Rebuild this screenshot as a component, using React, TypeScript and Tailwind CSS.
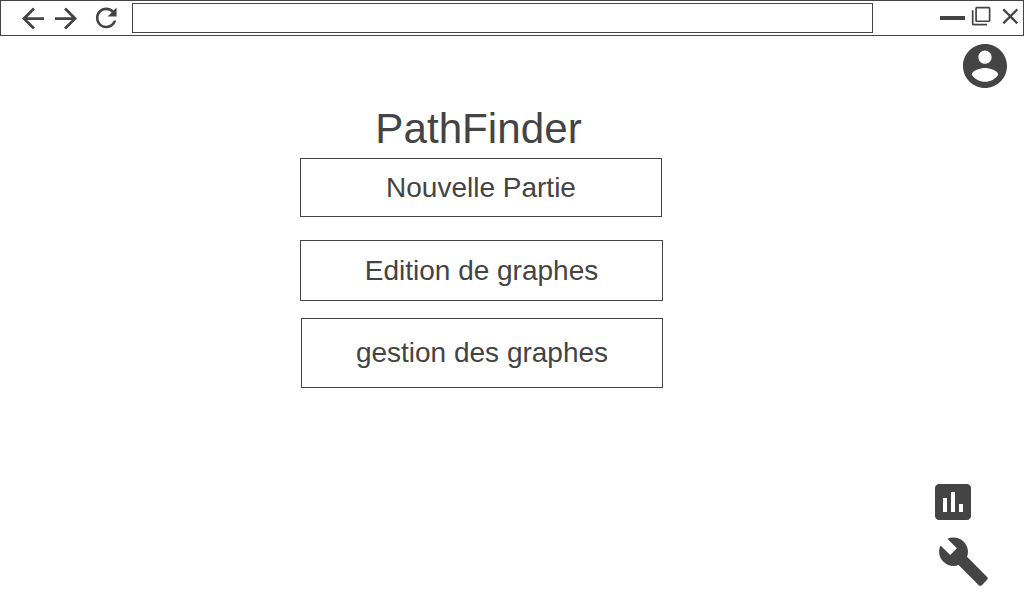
import type { ReactNode } from 'react';

type IconProps = { d: string; className: string; viewBox?: string };

function Icon({ d, className, viewBox = '0 0 24 24' }: IconProps) {
  return (
    <svg viewBox={viewBox} fill="currentColor" aria-hidden="true" className={`block shrink-0 ${className}`}>
      <path d={d} />
    </svg>
  );
}

const paths = {
  back: 'M20 11H7.83l5.59-5.59L12 4l-8 8 8 8 1.41-1.41L7.83 13H20v-2z',
  forward: 'M12 4l-1.41 1.41L16.17 11H4v2h12.17l-5.58 5.59L12 20l8-8z',
  refresh:
    'M17.65 6.35C16.2 4.9 14.21 4 12 4c-4.42 0-7.99 3.58-7.99 8s3.57 8 7.99 8c3.73 0 6.84-2.55 7.73-6h-2.08c-.82 2.33-3.04 4-5.65 4-3.31 0-6-2.69-6-6s2.69-6 6-6c1.66 0 3.14.69 4.22 1.78L13 11h7V4l-2.35 2.35z',
  windows:
    'M3 5H1v16c0 1.1.9 2 2 2h16v-2H3V5zm18-4H7c-1.1 0-2 .9-2 2v14c0 1.1.9 2 2 2h14c1.1 0 2-.9 2-2V3c0-1.1-.9-2-2-2zm0 16H7V3h14v14z',
  close:
    'M19 6.41L17.59 5 12 10.59 6.41 5 5 6.41 10.59 12 5 17.59 6.41 19 12 13.41 17.59 19 19 17.59 13.41 12z',
  account:
    'M12 2C6.48 2 2 6.48 2 12s4.48 10 10 10 10-4.48 10-10S17.52 2 12 2zm0 3c1.66 0 3 1.34 3 3s-1.34 3-3 3-3-1.34-3-3 1.34-3 3-3zm0 14.2c-2.5 0-4.71-1.28-6-3.22.03-1.99 4-3.08 6-3.08 1.99 0 5.97 1.09 6 3.08-1.29 1.94-3.5 3.22-6 3.22z',
  stats:
    'M19 3H5c-1.1 0-2 .9-2 2v14c0 1.1.9 2 2 2h14c1.1 0 2-.9 2-2V5c0-1.1-.9-2-2-2zM9 17H7v-7h2v7zm4 0h-2V7h2v10zm4 0h-2v-4h2v4z',
  wrench:
    'M22.7 19l-9.1-9.1c.9-2.3.4-5-1.5-6.9-2-2-5-2.4-7.4-1.3L9 6 6 9 1.6 4.7C.4 7.1.9 10.1 2.9 12.1c1.9 1.9 4.6 2.4 6.9 1.5l9.1 9.1c.4.4 1 .4 1.4 0l2.3-2.3c.5-.4.5-1.1.1-1.4z',
};

function MenuButton({ className, children }: { className: string; children: ReactNode }) {
  return (
    <button
      type="button"
      className={`flex items-center justify-center border border-[#444] text-[28px] leading-8 whitespace-nowrap ${className}`}
    >
      {children}
    </button>
  );
}

export default function App() {
  return (
    <div className="flex h-[600px] w-[1024px] flex-col overflow-hidden bg-white font-['Liberation_Sans',Arial,sans-serif] text-[#444]">
      <header className="flex h-9 shrink-0 items-start border border-[#444]">
        <button type="button" aria-label="Back" className="mt-px ml-4 shrink-0">
          <Icon d={paths.back} viewBox="0.36 0 24 24" className="size-[33px]" />
        </button>
        <button type="button" aria-label="Forward" className="mt-px shrink-0">
          <Icon d={paths.forward} viewBox="0.36 0 24 24" className="size-[33px]" />
        </button>
        <button type="button" aria-label="Reload" className="mt-px ml-2 shrink-0">
          <Icon d={paths.refresh} viewBox="0.2 -0.3 24 24" className="size-[31px]" />
        </button>
        <input type="text" aria-label="Address" className="mt-0.5 ml-2.5 h-[30px] w-[741px] shrink-0 border border-[#444] px-2 outline-none" />
        <button type="button" aria-label="Minimize" className="mt-[15px] ml-[67px] h-1 w-[25px] shrink-0 bg-[#444]" />
        <button type="button" aria-label="Restore" className="mt-[4.8px] ml-[5.8px] shrink-0">
          <Icon d={paths.windows} className="size-[20.3px]" />
        </button>
        <button type="button" aria-label="Close" className="mt-[2.3px] ml-[6px] shrink-0">
          <Icon d={paths.close} className="size-[26.7px]" />
        </button>
      </header>

      <div className="flex flex-1 justify-between">
        <main className="ml-[300px] flex w-[363px] flex-col pt-[69px]">
          <h1 className="mb-[5px] h-12 pr-[6px] text-center text-[42.2px] leading-[48px]">PathFinder</h1>
          <MenuButton className="mb-[23px] h-[59px] w-[362px]">Nouvelle Partie</MenuButton>
          <MenuButton className="mb-[17px] h-[61px] w-[363px]">Edition de graphes</MenuButton>
          <MenuButton className="ml-px h-[70px] w-[362px]">gestion des graphes</MenuButton>
        </main>

        <aside className="flex w-[90px] flex-col items-start">
          <button type="button" aria-label="Account" className="mt-[3px] ml-6">
            <Icon d={paths.account} viewBox="-0.27 -0.27 24.54 24.54" className="size-[54px]" />
          </button>
          <button type="button" aria-label="Statistics" className="mt-[385px] -ml-[5px]">
            <Icon d={paths.stats} className="size-12" />
          </button>
          <button type="button" aria-label="Settings" className="mt-[9px] ml-[3px]">
            <Icon d={paths.wrench} className="size-[53px]" />
          </button>
        </aside>
      </div>
    </div>
  );
}
